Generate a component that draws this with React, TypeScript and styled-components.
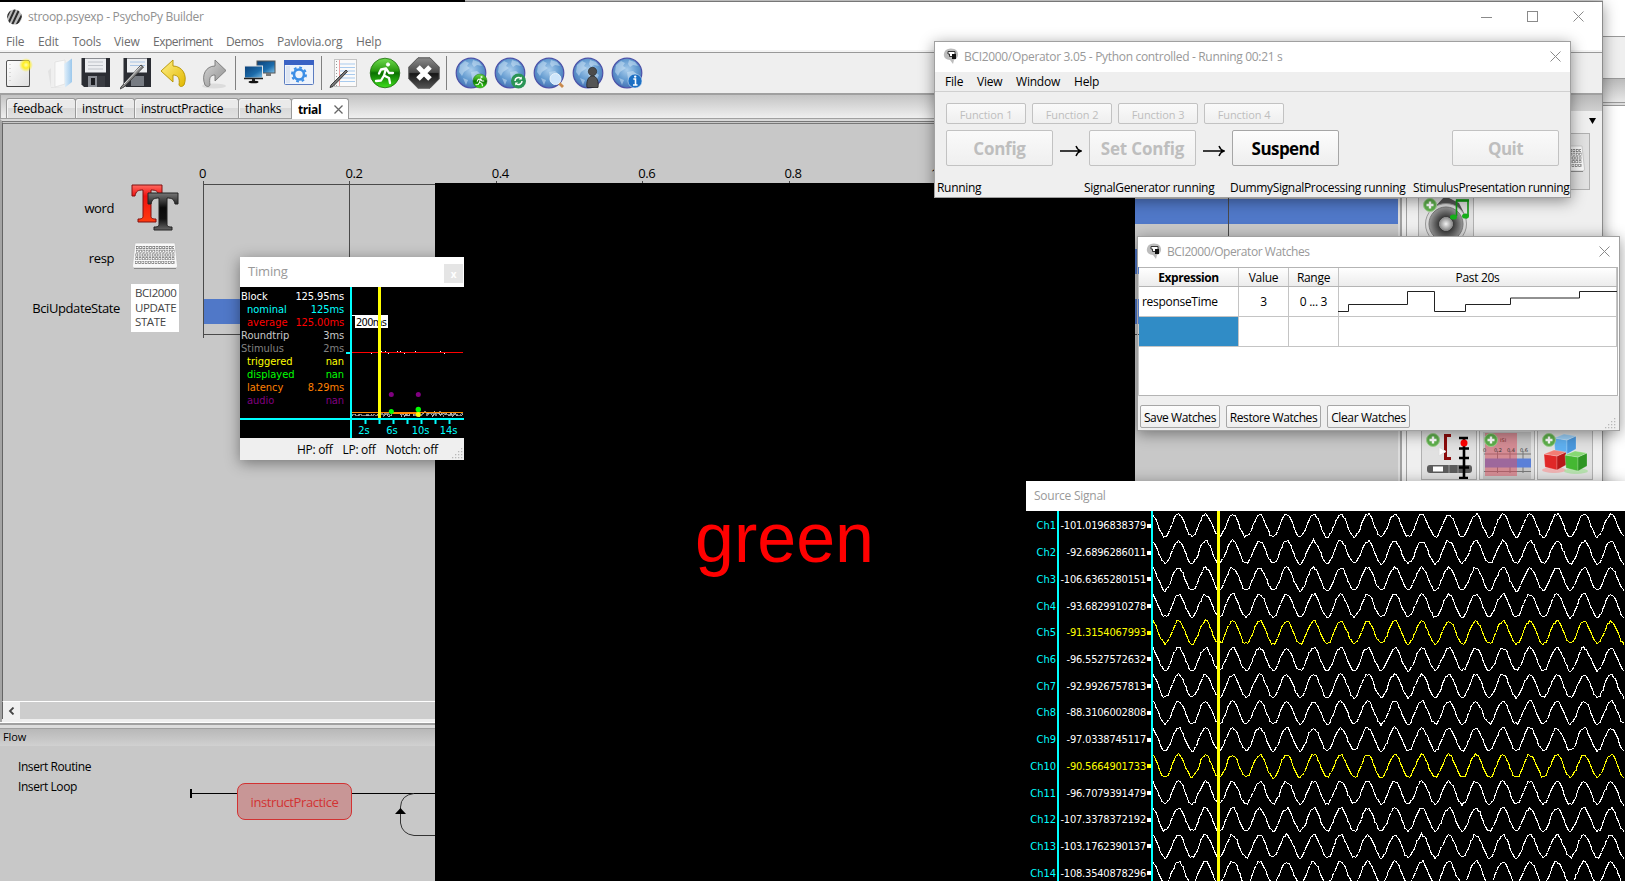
import React from "react";
import styled, { createGlobalStyle, css } from "styled-components";

const Global = createGlobalStyle`
  html, body { margin: 0; padding: 0; background: #fff; overflow: hidden; }
  * { box-sizing: border-box; }
  svg { display: block; flex: none; }
`;

const ui = `"Open Sans", "Noto Sans", sans-serif`;
const mono = `"DejaVu Sans Condensed", "DejaVu Sans", sans-serif`;

const Txt = styled.span<{ $s?: number; $ls?: number; $c?: string; $b?: boolean; $f?: string }>`
  font-family: ${(p) => p.$f ?? ui};
  font-size: ${(p) => p.$s ?? 12}px;
  letter-spacing: ${(p) => p.$ls ?? -0.3}px;
  color: ${(p) => p.$c ?? "#000"};
  font-weight: ${(p) => (p.$b ? 700 : 400)};
  white-space: nowrap;
`;

/* ---------- desktop ---------- */
const Desktop = styled.div`
  position: relative;
  width: 1625px;
  height: 881px;
  overflow: hidden;
  background: #fff;
`;

const Win = styled.section<{ $x: number; $y: number; $w: number; $h: number; $border?: string; $shadow?: boolean }>`
  position: absolute;
  left: ${(p) => p.$x}px;
  top: ${(p) => p.$y}px;
  width: ${(p) => p.$w}px;
  height: ${(p) => p.$h}px;
  display: flex;
  flex-direction: column;
  ${(p) => p.$border && css`border: 1px solid ${p.$border};`}
  ${(p) => p.$shadow && css`box-shadow: 0 3px 14px rgba(0, 0, 0, 0.42);`}
`;

const TopStrip = styled.div`
  height: 2px;
  display: flex;
  background: #d4d4d4;
  border-bottom: 1px solid #8a8a8a;
  &::before { content: ""; width: 465px; height: 2px; background: #000; flex: none; }
`;

const BackWindow = styled(Win)`
  background: #fff;
`;
const BackBand = styled.div<{ $h: number; $bg: string; $line?: string }>`
  height: ${(p) => p.$h}px;
  flex: none;
  background: ${(p) => p.$bg};
  border-top: 1px solid ${(p) => p.$line ?? "transparent"};
`;

/* ---------- PsychoPy builder ---------- */
const Builder = styled(Win)`
  background: #efefef;
  border-right: 1px solid #8c8c8c;
`;
const BuilderTitle = styled.header`
  height: 29px;
  background: #fff;
  display: flex;
  align-items: center;
  padding-left: 7px;
  gap: 6px;
  flex: none;
`;
const Controls = styled.div`
  margin-left: auto;
  display: flex;
  align-items: center;
  gap: 35px;
  padding-right: 18px;
`;
const BuilderMenu = styled.nav`
  height: 21px;
  flex: none;
  background: #fff;
  display: flex;
  align-items: center;
  padding-left: 6px;
`;
const MenuItem = styled.div<{ $w: number }>`
  width: ${(p) => p.$w}px;
  display: flex;
`;
const Toolbar = styled.div`
  height: 43px;
  flex: none;
  background: #efefef;
  border-top: 1px solid #999;
  border-bottom: 2px solid #a0a0a0;
  box-shadow: 0 -2px 0 #f4f4f4;
  display: flex;
  align-items: center;
  padding-left: 4px;
`;
const Tool = styled.div<{ $w: number }>`
  width: ${(p) => p.$w}px;
  flex: none;
  display: flex;
  align-items: center;
`;
const Sep = styled.div<{ $r: number }>`
  width: 1px;
  height: 34px;
  background: #808080;
  margin-right: ${(p) => p.$r}px;
  flex: none;
`;
const Body = styled.div`
  flex: 1;
  display: flex;
  min-height: 0;
`;
const LeftCol = styled.div`
  width: 1402px;
  flex: none;
  display: flex;
  flex-direction: column;
`;
const Tabs = styled.div`
  height: 24px;
  flex: none;
  display: flex;
  align-items: flex-end;
  padding-left: 5px;
  background: linear-gradient(#c4c4c4, #efefef);
  border-bottom: 1px solid #a0a0a0;
  border-left: 1px solid #a0a0a0;
`;
const Tab = styled.div<{ $w: number; $on?: boolean }>`
  width: ${(p) => p.$w}px;
  height: ${(p) => (p.$on ? 21 : 20)}px;
  margin-bottom: ${(p) => (p.$on ? -1 : 0)}px;
  flex: none;
  display: flex;
  align-items: center;
  justify-content: space-between;
  padding: 0 5px 0 6px;
  border: 1px solid #999;
  border-bottom: 0;
  margin-right: -1px;
  border-radius: 3px 3px 0 0;
  background: ${(p) => (p.$on ? "#fff" : "linear-gradient(#eaeaea 0 45%, #dadada 50%, #e2e2e2)")};
  box-shadow: ${(p) => (p.$on ? "none" : "inset 1px 1px 0 #f6f6f6")};
`;
const CanvasFrame = styled.div`
  flex: none;
  height: 603px;
  border-top: 2px solid #d9d9d9;
  border-left: 2px solid #a4a4a4;
  border-right: 2px solid #a0a0a0;
  display: flex;
  flex-direction: column;
`;
const RoutineCanvas = styled.div`
  height: 580px;
  flex: none;
  background: #c8c8c8;
  border-top: 3px double #777;
  border-left: 1px solid #646464;
  border-right: 2px solid #dcdcdc;
  display: flex;
  overflow: hidden;
`;
const Components = styled.div`
  width: 200px;
  flex: none;
  padding-top: 59px;
  display: flex;
  flex-direction: column;
`;
const ComponentRow = styled.div<{ $g: number }>`
  height: 50px;
  display: flex;
  align-items: center;
  justify-content: flex-end;
  gap: ${(p) => p.$g}px;
  padding-right: 24px;
`;
const Raised = styled.div`
  padding-bottom: 5px;
`;
const BciIcon = styled.div`
  width: 48px;
  height: 48px;
  background: #fff;
  display: flex;
  flex-direction: column;
  justify-content: center;
  padding-left: 4px;
  & > span { line-height: 14.4px; }
`;
const ScrollRow = styled.div`
  height: 18px;
  flex: none;
  display: flex;
  background: #cdcdcd;
  border-top: 1px solid #fff;
  border-left: 1px solid #646464;
`;
const ScrollButton = styled.div`
  width: 17px;
  background: #f0f0f0;
  display: flex;
  align-items: center;
  justify-content: center;
`;
const FlowHead = styled.div`
  height: 24px;
  flex: none;
  border-top: 1px solid #fff;
  display: flex;
  flex-direction: column;
`;
const Sash = styled.div`
  height: 6px;
  flex: none;
  background: #dcdcdc;
  border-top: 2px solid #a0a0a0;
  border-bottom: 1px solid #a0a0a0;
`;
const FlowTitle = styled.div`
  flex: 1;
  background: linear-gradient(#b8b8b8, #d2d2d2);
  display: flex;
  align-items: center;
  padding: 0 0 3px 3px;
`;
const FlowBody = styled.div`
  flex: 1;
  background: #c8c8c8;
  display: flex;
`;
const FlowActions = styled.div`
  width: 180px;
  padding: 11px 0 0 18px;
  display: flex;
  flex-direction: column;
  & > span { line-height: 20px; }
`;
const FlowLine = styled.div`
  display: flex;
  align-items: flex-start;
  padding-top: 37px;
`;
const Routine = styled.div`
  width: 115px;
  height: 37px;
  flex: none;
  border: 1px solid #d23232;
  border-radius: 8px;
  background: #c89696;
  display: flex;
  align-items: center;
  justify-content: center;
`;
const Side = styled.aside`
  flex: 1;
  border-left: 1px solid #a0a0a0;
  margin-left: 4px;
  background: #efefef;
  display: flex;
  flex-direction: column;
`;
const SideHead = styled.div`
  height: 16px;
  flex: none;
  background: linear-gradient(#b8b8b8, #d0d0d0);
`;
const SideDrop = styled.div`
  height: 20px;
  flex: none;
  display: flex;
  justify-content: flex-end;
  align-items: center;
  padding-right: 6px;
`;
const TileRow = styled.div<{ $mt: number; $l: number }>`
  margin-top: ${(p) => p.$mt}px;
  padding-left: ${(p) => p.$l}px;
  display: flex;
  gap: 2px;
`;
const Tile = styled.div<{ $ghost?: boolean }>`
  width: 56px;
  height: 57px;
  flex: none;
  border: 1px solid #b0b0b0;
  background: #e1e1e1;
  display: flex;
  align-items: center;
  justify-content: center;
  visibility: ${(p) => (p.$ghost ? "hidden" : "visible")};
`;

const StimWindow = styled(Win)`
  background: #000;
  align-items: center;
`;
const Stim = styled.div`
  margin-top: 315px;
  margin-right: 1px;
  font: 70px/80px "Liberation Sans", Arial, sans-serif;
  color: #f00;
`;

/* ---------- shared window pieces ---------- */
const TitleBar = styled.header<{ $pl: number; $pr?: number }>`
  height: 30px;
  flex: none;
  background: #fff;
  display: flex;
  align-items: center;
  gap: 5px;
  padding-bottom: 2px;
  padding-left: ${(p) => p.$pl}px;
  padding-right: ${(p) => p.$pr ?? 0}px;
  & > :last-child:not(:first-child) { margin-left: auto; }
`;
const QtButton = styled.div<{ $w: number; $h: number; $dim?: boolean }>`
  width: ${(p) => p.$w}px;
  height: ${(p) => p.$h}px;
  flex: none;
  border: 1px solid ${(p) => (p.$dim ? "#c2c2c2" : "#a6a6a6")};
  border-radius: 2px;
  background: ${(p) => (p.$dim ? "linear-gradient(#fafafa, #efefef)" : "linear-gradient(#fdfdfd, #eeeeee)")};
  display: flex;
  align-items: center;
  justify-content: center;
  padding-top: 1px;
`;

/* ---------- operator ---------- */
const OpMenu = styled.nav`
  height: 20px;
  flex: none;
  background: #efefef;
  border-bottom: 1px solid #d0d0d0;
  display: flex;
  align-items: center;
  padding-left: 10px;
`;
const OpBody = styled.div`
  flex: 1;
  background: #efefef;
  padding: 11px 11px 0 11px;
`;
const OpFns = styled.div`
  display: flex;
  gap: 6px;
`;
const OpMain = styled.div`
  display: flex;
  margin-top: 6px;
  align-items: center;
`;
const Arrow = styled.div`
  width: 36px;
  display: flex;
  justify-content: center;
  padding-top: 5px;
`;
const Push = styled.div`margin-left: auto;`;
const OpStatus = styled.div`
  height: 19px;
  flex: none;
  background: #efefef;
  display: grid;
  grid-template-columns: 147px 146px 183px 1fr;
  padding-left: 2px;
  align-items: center;
`;

/* ---------- watches ---------- */
const Table = styled.div`
  height: 129px;
  flex: none;
  margin: 0 1px;
  background: #fff;
  border: 1px solid #b4b4b4;
  border-left: 0;
`;
const cols = css`
  display: grid;
  grid-template-columns: 100px 50px 50px 1fr;
`;
const HeadRow = styled.div`
  ${cols}
  height: 19px;
  background: linear-gradient(#fff, #ececec);
  border-bottom: 1px solid #b4b4b4;
`;
const Row = styled.div`
  ${cols}
  height: 30px;
  border-bottom: 1px solid #c4c4c4;
`;
const Cell = styled.div<{ $left?: boolean; $sel?: boolean }>`
  display: flex;
  align-items: center;
  justify-content: ${(p) => (p.$left ? "flex-start" : "center")};
  padding-left: ${(p) => (p.$left ? 3 : 0)}px;
  border-right: 1px solid #c4c4c4;
  background: ${(p) => (p.$sel ? "#308cc6" : "transparent")};
  min-width: 0;
`;
const WatchFoot = styled.div`
  flex: 1;
  background: #efefef;
  display: flex;
  gap: 6px;
  padding: 9px 2px 0 2px;
`;
const Grip = styled.div`
  margin-left: auto;
  align-self: flex-end;
`;

/* ---------- timing ---------- */
const CloseBox = styled.div`
  width: 19px;
  height: 19px;
  margin-top: 5px;
  background: #e5e5e5;
  display: flex;
  align-items: center;
  justify-content: center;
`;
const TimingBody = styled.div`
  height: 151px;
  flex: none;
  background: #000;
  display: flex;
  & > svg { overflow: visible; }
`;
const Stats = styled.div`
  width: 104px;
  flex: none;
  padding: 3px 0 0 1px;
`;
const Stat = styled.div<{ $in?: boolean }>`
  height: 13px;
  display: flex;
  justify-content: space-between;
  align-items: center;
  padding-left: ${(p) => (p.$in ? 6 : 0)}px;
`;
const TimingFoot = styled.div`
  flex: 1;
  background: #efefef;
  display: flex;
  align-items: center;
  gap: 10px;
  padding-left: 57px;
`;

/* ---------- source signal ---------- */
const SigBody = styled.div`
  flex: 1;
  background: #000;
  display: flex;
  overflow: hidden;
`;
const SigNames = styled.div<{ $w: number }>`
  width: ${(p) => p.$w}px;
  flex: none;
  padding-top: 1.5px;
  border-right: 2px solid #00ffff;
`;
const SigCell = styled.div<{ $y: boolean; $v?: boolean }>`
  height: 26.73px;
  display: flex;
  align-items: center;
  justify-content: flex-end;
  gap: 1px;
  padding-right: ${(p) => (p.$v ? 0 : 1)}px;
  &::after {
    content: "";
    display: ${(p) => (p.$v ? "block" : "none")};
    width: 4px;
    height: 4px;
    background: ${(p) => (p.$y ? "#ff0" : "#fff")};
  }
`;

/* ---------- icons ---------- */
const Defs = () => (
  <svg width="0" height="0" style={{ position: "absolute" }}>
    <defs>
      <radialGradient id="globe" cx="50%" cy="40%" r="60%">
        <stop offset="0" stopColor="#a9cdec" /><stop offset=".6" stopColor="#6199cf" /><stop offset="1" stopColor="#4672b4" />
      </radialGradient>
      <linearGradient id="run" x1="0" y1="0" x2="0" y2="1">
        <stop offset="0" stopColor="#6fdc4e" /><stop offset=".42" stopColor="#2a9a10" /><stop offset=".5" stopColor="#0a7000" /><stop offset="1" stopColor="#3fe01c" />
      </linearGradient>
      <linearGradient id="stop" x1="0" y1="0" x2="0" y2="1">
        <stop offset="0" stopColor="#8a8a8a" /><stop offset=".48" stopColor="#4a4a4a" /><stop offset=".52" stopColor="#161616" /><stop offset="1" stopColor="#555" />
      </linearGradient>
      <linearGradient id="yel" x1="0" y1="0" x2="1" y2="1">
        <stop offset="0" stopColor="#fff08a" /><stop offset="1" stopColor="#e2b800" />
      </linearGradient>
      <linearGradient id="gry" x1="0" y1="0" x2="1" y2="1">
        <stop offset="0" stopColor="#d8d8d8" /><stop offset="1" stopColor="#8c8c8c" />
      </linearGradient>
      <linearGradient id="scr" x1="0" y1="0" x2="1" y2="1">
        <stop offset="0" stopColor="#0b3f77" /><stop offset=".6" stopColor="#1c6cab" /><stop offset="1" stopColor="#7fc0e8" />
      </linearGradient>
      <linearGradient id="redT" x1="0" y1="0" x2="0" y2="1">
        <stop offset="0" stopColor="#ff6a60" /><stop offset=".3" stopColor="#f01010" /><stop offset="1" stopColor="#ff3c10" />
      </linearGradient>
      <linearGradient id="blkT" x1="0" y1="0" x2="0" y2="1">
        <stop offset="0" stopColor="#777" /><stop offset=".4" stopColor="#0a0a0a" /><stop offset=".7" stopColor="#111" /><stop offset="1" stopColor="#666" />
      </linearGradient>
      <radialGradient id="cone"><stop offset="0" stopColor="#f4f4f4" /><stop offset=".4" stopColor="#888" /><stop offset=".42" stopColor="#3a3a3a" /><stop offset="1" stopColor="#9a9a9a" /></radialGradient>
      <radialGradient id="sun"><stop offset="0" stopColor="#ffffb0" /><stop offset=".45" stopColor="#ffee20" /><stop offset="1" stopColor="#ffee20" stopOpacity="0" /></radialGradient>
      <linearGradient id="page" x1="0" y1="0" x2="1" y2="1"><stop offset="0" stopColor="#fff" /><stop offset="1" stopColor="#dedede" /></linearGradient>
      <linearGradient id="fold" x1="0" y1="0" x2="1" y2="0"><stop offset="0" stopColor="#e4f1fb" /><stop offset="1" stopColor="#9cc8ec" /></linearGradient>
    </defs>
  </svg>
);

const AppLogo = () => (
  <svg width="15" height="16" viewBox="0 0 15 16">
    <circle cx="7.5" cy="8" r="7.4" fill="#bdbdbd" />
    <clipPath id="lc"><circle cx="7.5" cy="8" r="7.4" /></clipPath>
    <g clipPath="url(#lc)" stroke="#2e2e2e" strokeWidth="2">
      <path d="M-3 14 4 -1M1 15 8 0M5 16 12 1M9 17 17 2" />
    </g>
  </svg>
);
const X = ({ s = 10, c = "#8a8a8a", w = 1 }: { s?: number; c?: string; w?: number }) => (
  <svg width={s} height={s} viewBox={`0 0 ${s} ${s}`}><path d={`M.5 .5 ${s - 0.5} ${s - 0.5}M${s - 0.5} .5 .5 ${s - 0.5}`} stroke={c} strokeWidth={w} /></svg>
);
const HeadIcon = () => (
  <svg width="16" height="16" viewBox="0 0 16 16">
    <path d="M2 3C4 0 11-.5 14 3c2 3 1 6-1 8l-2 1-1 4-3-4C2 12-1 8 2 3Z" fill="#bcbcbc" />
    <path d="M5 3.500h7v5H6.500V6H5Z" fill="#fff" stroke="#333" />
    <rect x="9" y="6" width="4" height="5" fill="#111" />
  </svg>
);
const NewIcon = () => (
  <svg width="32" height="34" viewBox="0 0 32 34">
    <rect x="2.500" y="4.500" width="23" height="26" rx="1.500" fill="url(#page)" stroke="#555" />
    <path d="M2.500 30.500H25.500" stroke="#444" /><path d="M6 8v20" stroke="#bbb" strokeDasharray="1 3" />
    <circle cx="22" cy="9" r="7" fill="url(#sun)" />
  </svg>
);
const OpenIcon = () => (
  <svg width="32" height="34" viewBox="0 0 32 34">
    <path d="M8 5 14 3 26 3V27L20 31H8Z" fill="#f0f0f0" />
    <path d="M10 6 20 4V28L10 31Z" fill="#fafafa" stroke="#d8d8d8" strokeWidth=".6" />
    <path d="M19 8 27 2.500V26L20 31.500Z" fill="url(#fold)" />
    <path d="M3 15 6 12V31H18L6 32Z" fill="#e2e2e2" />
  </svg>
);
const SaveIcon = () => (
  <svg width="32" height="34" viewBox="0 0 32 34">
    <path d="M1.500 2H30V31H4L1.500 28.500Z" fill="#2b2d33" />
    <rect x="5" y="2.500" width="21" height="14" fill="#eceef1" />
    <path d="M8 6H23M8 9.500H23M8 13H23" stroke="#c0c4ca" />
    <rect x="8" y="20" width="16" height="11" fill="#8b8e95" /><rect x="11" y="22" width="4" height="7" fill="#1c1d21" />
    <rect x="17" y="20" width="8" height="11" fill="#3a3c42" />
  </svg>
);
const Pen = () => <g><path d="M1 31 21 9 23.500 11 4 31 0 33Z" fill="#8b8b8b" stroke="#3c3c3c" strokeWidth=".9" /><path d="M4 28 21 10" stroke="#e6e6e6" /></g>;
const SaveAsIcon = () => (
  <svg width="34" height="34" viewBox="0 0 34 34">
    <g transform="translate(2)"><path d="M1.500 2H29V31H4L1.500 28.500Z" fill="#2b2d33" />
      <rect x="5" y="2.500" width="20" height="14" fill="#eceef1" /><path d="M8 6H23M8 9.500H23" stroke="#a9c4e4" />
      <rect x="9" y="20" width="13" height="10" fill="#777b82" /></g>
    <Pen />
  </svg>
);
const UndoIcon = () => (
  <svg width="28" height="34" viewBox="0 0 28 34">
    <path d="M13 4V10C22 10 28 19 24 29C22 31 20 31 19 29C20 22 18 19 13 19V26L1 15Z" fill="url(#yel)" stroke="#b39200" strokeWidth=".9" />
  </svg>
);
const RedoIcon = () => (
  <svg width="28" height="34" viewBox="0 0 28 34">
    <ellipse cx="13" cy="30" rx="12" ry="2.500" fill="#dcdcdc" />
    <path d="M14 4V10C5 10 0 19 4 29C6 31 8 31 9 29C8 22 9 19 14 19V25L25 14.500Z" fill="url(#gry)" stroke="#777" strokeWidth=".9" />
  </svg>
);
const MonitorsIcon = () => (
  <svg width="32" height="34" viewBox="0 0 32 34">
    <rect x="13" y="5" width="18" height="12" fill="url(#scr)" stroke="#555" /><rect x="22" y="17" width="5" height="3" fill="#777" />
    <rect x=".5" y="10" width="18" height="12" fill="url(#scr)" stroke="#e6e6e6" /><path d="M0 22.500H19" stroke="#222" strokeWidth="1.500" />
    <rect x="8" y="23" width="3" height="3" fill="#222" /><ellipse cx="9.500" cy="26" rx="5" ry="1.300" fill="#111" />
  </svg>
);
const PrefsIcon = () => (
  <svg width="30" height="34" viewBox="0 0 30 34">
    <rect x=".5" y="4.500" width="29" height="24" rx="1" fill="#eef3fb" stroke="#5b7cc0" /><rect x="0" y="4" width="30" height="5" fill="#3a62c4" />
    <rect x="2" y="10" width="4" height="17" fill="#dde5f2" />
    <circle cx="15" cy="18.500" r="5" fill="none" stroke="#3c8ee6" strokeWidth="2.600" />
    <circle cx="15" cy="18.500" r="7" fill="none" stroke="#3c8ee6" strokeWidth="2" strokeDasharray="2.700 2.800" />
  </svg>
);
const ScriptIcon = () => (
  <svg width="30" height="34" viewBox="0 0 30 34">
    <rect x="5.500" y="3.500" width="22" height="27" fill="#fafafa" stroke="#c4c4c4" />
    <path d="M10 8H26M10 11.500H26M10 15H26M10 18.500H26M10 22H26M10 25.500H26" stroke="#a9cbee" /><path d="M10.500 4V30" stroke="#f2a0a0" /><path d="M7.500 5V30" stroke="#999" strokeDasharray="1 2" />
    <path d="M2 29 17 14 18.500 15.500 4 30.500 1 31.500Z" fill="#777" stroke="#222" strokeWidth=".8" />
  </svg>
);
const Runner = () => (
  <g fill="none" stroke="#fff" strokeWidth="2.300" strokeLinecap="round" strokeLinejoin="round">
    <circle cx="19" cy="7.500" r="1.600" fill="#fff" stroke="#fff" strokeWidth="1" />
    <path d="M17 11.500 15 18.500 20 21 21 26M15 18.500 12 23.500 7 24M17 11.500 12 12.500 10 16.500M17.500 12 20 16 24 16" />
  </g>
);
const RunIcon = () => (
  <svg width="32" height="32" viewBox="0 0 32 32"><circle cx="16" cy="16" r="14.800" fill="url(#run)" stroke="#1e6a10" strokeWidth=".8" /><Runner /></svg>
);
const StopIcon = () => (
  <svg width="32" height="32" viewBox="0 0 32 32">
    <path d="M10 .8H22L31.200 10V22L22 31.200H10L.8 22V10Z" fill="url(#stop)" stroke="#555" />
    <path d="M10 10 22 22M22 10 10 22" stroke="#fff" strokeWidth="5" />
  </svg>
);
const Globe = ({ children }: { children: React.ReactNode }) => (
  <svg width="33" height="32" viewBox="0 0 33 32">
    <circle cx="16" cy="16" r="14.800" fill="url(#globe)" stroke="#4c51a8" strokeWidth="1.200" />
    <path d="M5 8 10 4 14 6 12 9 15 11 9 15 7 19 4 15Z M18 3 24 5 27 9 22 8 19 10 17 7Z M16 15 22 14 27 18 24 24 20 27 17 22Z M8 21 13 23 11 28Z" fill="#d3e8f8" opacity=".5" />
    {children}
  </svg>
);
const globes = [
  <><circle cx="25" cy="24" r="7" fill="url(#run)" stroke="#1e6a10" strokeWidth=".5" /><g transform="translate(17.500 16.500) scale(.47)"><Runner /></g></>,
  <><circle cx="24.500" cy="24" r="7.500" fill="#2b9556" /><path d="M21 24a3.500 3.500 0 0 1 6-2.500M28 24a3.500 3.500 0 0 1-6 2.500" fill="none" stroke="#fff" strokeWidth="1.500" /><path d="M27.800 19.500v3h-3ZM21.200 28.500v-3h3Z" fill="#fff" /></>,
  <><path d="M25 25 30 30" stroke="#c98a4c" strokeWidth="2.800" /><circle cx="22.500" cy="22" r="5.500" fill="#cfe6fb" stroke="#e9f3fc" /></>,
  <><circle cx="20.500" cy="14.500" r="4.200" fill="#4c4c4c" stroke="#222" strokeWidth=".6" /><path d="M20.500 19C25 19 27 25 26 30.500H15C14 25 16 19 20.500 19Z" fill="#555" stroke="#222" strokeWidth=".8" /></>,
  <><circle cx="24" cy="24" r="7" fill="#1d70c4" stroke="#e2edf8" strokeWidth=".5" /><path d="M22.300 22H24.500V28M22 28H26.500" stroke="#fff" strokeWidth="1.600" fill="none" /><circle cx="24.200" cy="19.600" r="1.200" fill="#fff" /></>,
];
const tPath = "M0 0H30V11H27C26 6 24 5 19 5V31C19 33 20 34 24 34V37H6V34C10 34 11 33 11 31V5C6 5 4 6 3 11H0Z";
const TextIcon = () => (
  <svg width="48" height="48" viewBox="0 0 48 48">
    <path d={tPath} transform="translate(1 1)" fill="url(#redT)" stroke="#801010" />
    <path d={tPath} transform="translate(17 9)" fill="url(#blkT)" stroke="#222" />
  </svg>
);
const KeyboardIcon = () => (
  <svg width="48" height="28" viewBox="0 0 48 28">
    <path d="M4 1H44L46.500 24Q46.500 26 45 26H3Q1.500 26 1.500 24Z" fill="#f8f8f8" stroke="#c0c0c0" strokeWidth=".8" />
    <path d="M3 26.500H45" stroke="#8a8a8a" />
    <g stroke="#6a6a6a" strokeWidth="2.800" strokeDasharray="2.500 .8"><path d="M5 5.500H43M5 9.200H43.500M4.500 13H44M4.500 16.700H44M4 20.300H44" /></g>
    <g stroke="#fff" strokeWidth="1.500" strokeDasharray="1.500 1.800" strokeDashoffset="-.5"><path d="M5 5.500H43M5 9.200H43.500M4.500 13H44M4.500 16.700H44M4 20.300H44" /></g>
  </svg>
);
const Plus = ({ x, y }: { x: number; y: number }) => (
  <g transform={`translate(${x} ${y})`}>
    <circle r="6.500" fill="#5eb04c" stroke="#9fd08f" /><path d="M-3.500 0H3.500M0 -3.500V3.500" stroke="#fff" strokeWidth="2.400" />
  </g>
);
const SpeakerIcon = () => (
  <svg width="54" height="55" viewBox="0 0 54 55">
    <path d="M14 18 26 5 40 12 48 28Z" fill="#555" />
    <circle cx="27" cy="33" r="20.500" fill="#d9d9d9" stroke="#999" /><circle cx="27" cy="33" r="17" fill="url(#cone)" stroke="#777" />
    <path d="M37.500 25V9.500H49V25" fill="none" stroke="#0f9a12" strokeWidth="1.600" /><path d="M37 9.500H50" stroke="#0f9a12" strokeWidth="2.500" />
    <ellipse cx="34.500" cy="26" rx="3.500" ry="2.600" fill="#16b01a" /><ellipse cx="46.500" cy="25" rx="3.500" ry="2.600" fill="#16b01a" />
    <Plus x={11} y={14} />
  </svg>
);
const SliderIcon = () => (
  <svg width="54" height="55" viewBox="0 0 54 55">
    <path d="M29 11.500H23.500V34.500H29" fill="none" stroke="#8c0c0c" strokeWidth="3" /><path d="M17 23 24 27.500 17 32Z" fill="#fff" stroke="#ddd" />
    <rect x="5" y="41" width="45" height="8" rx="3" fill="#5c5c5c" /><rect x="11" y="42.500" width="10" height="5" fill="#fff" /><path d="M27 41V49M36 41V49" stroke="#999" />
    <path d="M42 14V54M37 14H46M37 24.500H47M37 34H47M37 43.500H47M37 54H46" stroke="#000" strokeWidth="2.600" />
    <circle cx="42" cy="19" r="3.500" fill="#f00" /><Plus x={11} y={16} />
  </svg>
);
const StaticIcon = () => (
  <svg width="54" height="55" viewBox="0 0 54 55">
    <rect x="3" y="8" width="48" height="47" fill="#c8c8c8" />
    <path d="M4 30H51M4 47.500H51M17.500 27V49M30 27V49M43 27V49" stroke="#777" fill="none" />
    <rect x="5" y="34.500" width="46" height="9" fill="#5a80d8" /><rect x="5" y="9" width="32" height="43" fill="#e05060" opacity=".5" />
    <g fontFamily="DejaVu Sans" fontSize="5" fill="#333"><text x="3" y="27.500">0</text><text x="14" y="27.500">0.2</text><text x="27" y="27.500">0.4</text><text x="40" y="27.500">0.6</text><text x="20" y="18" fill="#803030">ISI</text></g>
    <Plus x={11} y={16} />
  </svg>
);
const Cube = ({ x, y, c, t, s }: { x: number; y: number; c: string; t: string; s: string }) => (
  <g transform={`translate(${x} ${y})`} stroke="#fff" strokeOpacity=".35" strokeWidth=".6"><path d="M0 4 13 6V20L1 17Z" fill={c} /><path d="M13 6 22 2V15L13 20Z" fill={s} /><path d="M0 4 10 0 22 2 13 6Z" fill={t} /></g>
);
const CubesIcon = () => (
  <svg width="54" height="55" viewBox="0 0 54 55">
    <ellipse cx="16" cy="46" rx="12" ry="3" fill="#f7a0a0" opacity=".7" /><ellipse cx="38" cy="47" rx="12" ry="3" fill="#a5e29a" opacity=".7" />
    <Cube x={16} y={10} c="#5fb0f0" t="#9bd0f8" s="#4a98dd" />
    <Cube x={6} y={26} c="#e02828" t="#f27c74" s="#b81818" />
    <Cube x={27} y={27} c="#45b832" t="#86d873" s="#2f9624" />
    <Plus x={11} y={16} />
  </svg>
);
const GripDots = () => (
  <svg width="12" height="12" viewBox="0 0 12 12" fill="#b8b8b8">
    {[[9, 0], [6, 3], [9, 3], [3, 6], [6, 6], [9, 6], [0, 9], [3, 9], [6, 9], [9, 9]].map(([x, y]) => <rect key={`${x}-${y}`} x={x} y={y} width="1.300" height="1.300" />)}
  </svg>
);
const ArrowRight = () => (
  <svg width="22" height="12" viewBox="0 0 22 12"><path d="M0 6H20.500M16 1Q17.500 5 21 6Q17.500 7 16 11" fill="none" stroke="#000" strokeWidth="1.400" /></svg>
);

/* ---------- data & charts ---------- */
function rng(seed: number) {
  let s = seed;
  return () => {
    s = (s * 1103515245 + 12345) & 0x7fffffff;
    return s / 0x7fffffff;
  };
}
const values = ["-101.0196838379", "-92.6896286011", "-106.6365280151", "-93.6829910278", "-91.3154067993", "-96.5527572632", "-92.9926757813", "-88.3106002808", "-97.0338745117", "-90.5664901733", "-96.7079391479", "-107.3378372192", "-103.1762390137", "-108.3540878296"];
const hot = (i: number) => i === 4 || i === 9;

const wave = (i: number) => {
  const r = rng(i * 977 + 31);
  const c = 14 + i * 26.73;
  const pts: string[] = [];
  for (let x = 0; x <= 472; x += 1.5) {
    const y = c - 11.3 * Math.cos(((x + 1.5) / 27.03) * Math.PI * 2) + (r() - 0.5) * 2.4;
    pts.push(`${x.toFixed(1)} ${(Math.round(y) + 0.5).toFixed(1)}`);
  }
  return "M" + pts.join("L");
};

const SignalPlot = () => (
  <svg width="472" height="370" viewBox="0 0 472 370" shapeRendering="crispEdges">
    {Array.from({ length: 15 }, (_, i) => <path key={i} d={wave(i)} fill="none" stroke={hot(i) ? "#ff0" : "#fff"} />)}
    <rect x="64" y="0" width="3" height="370" fill="#ff0" />
  </svg>
);

const noise = (() => {
  const r = rng(77);
  let a = "M112 128";
  let b = "M112 127";
  for (let x = 112; x <= 223; x += 1.5) {
    const k = x > 141 ? 4.5 : 2;
    a += `L${x} ${(129.5 - r() * k).toFixed(1)}`;
    b += `L${x} ${(129 - r() * k).toFixed(1)}`;
  }
  return [a, b];
})();

const TimingPlot = () => (
  <svg width="120" height="151" viewBox="104 0 120 151">
    <g shapeRendering="crispEdges">
      <path d="M112 65.500H223" stroke="#f00" />
      <path d={noise[0]} fill="none" stroke="#b0b0b0" /><path d={noise[1]} fill="none" stroke="#808080" />
      {[131, 141, 145, 148, 157, 160, 164, 175, 200, 204].map((x, i) => <rect key={x} x={x} y={i % 3 ? 64 : 66} width="1" height="1" fill="#fff" />)}
      <path d="M112 125.500H223M151 126.500H176" stroke="#f80" />
      <rect x="112" y="28" width="4" height="1" fill="#fff" />
      <rect x="115" y="28" width="33" height="13" fill="#fff" />
    </g>
    <g fill="#800080"><circle cx="151.300" cy="107.500" r="2.500" /><circle cx="178.300" cy="107.500" r="2.500" /></g>
    <g fill="#0f0"><circle cx="151.300" cy="124.500" r="2.500" /><circle cx="178.300" cy="122.500" r="2.700" /></g>
    <circle cx="178.300" cy="127.500" r="2.500" fill="#ff0" />
    <text x="116" y="39" fontFamily="DejaVu Sans Condensed" fontSize="11" textLength="31">200ms</text>
    <rect x="138" y="0" width="3" height="131" fill="#ff0" />
    <g fill="#0ff">
      <rect x="110" y="0" width="2" height="151" /><rect x="106" y="65" width="4" height="2" /><rect x="0" y="131" width="224" height="2" />
      {[125, 139, 153, 167, 181, 195, 209].map((x) => <rect key={x} x={x - 0.5} y="133" width="2" height="4" />)}
    </g>
    <g fill="#0ff" fontFamily="DejaVu Sans Condensed" fontSize="11" textAnchor="middle">
      <text x="124" y="147">2s</text><text x="152" y="147">6s</text><text x="180.500" y="147">10s</text><text x="208.500" y="147">14s</text>
    </g>
  </svg>
);

const Timeline = () => (
  <svg width="1196" height="240" viewBox="203 124 1196 240">
    <g fill="#5078c8"><rect x="203" y="199" width="1196" height="25" /><rect x="1100" y="249" width="120" height="25" /><rect x="203" y="299" width="1000" height="25" /></g>
    <rect x="203" y="190" width="900" height="50" fill="#c8c8c8" />
    <path d="M203.500 184.500H1399M203.500 334.500H1399" stroke="#4a4a4a" />
    {[0, 1, 2, 3, 4, 5, 6, 7].map((i) => <path key={i} d={`M${Math.round(203 + i * 146.4) + 0.5} 181V338`} stroke="#4a4a4a" />)}
  </svg>
);
const Chart = styled.div`
  flex: 1;
  min-width: 0;
  display: flex;
  flex-direction: column;
`;
const Scale = styled.div`
  height: 58px;
  flex: none;
  display: flex;
  align-items: flex-end;
  margin-left: -4px;
`;
const ScaleMark = styled.div`
  width: 146.4px;
  flex: none;
  display: flex;
`;
const Lift = styled.div`
  margin-top: -58px;
`;

const stats: [string, string, string, boolean][] = [
  ["Block", "125.95ms", "#fff", false], ["nominal", "125ms", "#0ff", true], ["average", "125.00ms", "#f00", true],
  ["Roundtrip", "3ms", "#c8c8c8", false], ["Stimulus", "2ms", "#808080", false], ["triggered", "nan", "#ff0", true],
  ["displayed", "nan", "#0f0", true], ["latency", "8.29ms", "#ff8000", true], ["audio", "nan", "#800080", true],
];

const menus: [string, number, number][] = [["File", 32, -0.15], ["Edit", 34.5, -0.15], ["Tools", 41.5, -0.3], ["View", 39, -0.15], ["Experiment", 73, -0.5], ["Demos", 51, -0.4], ["Pavlovia.org", 79, -0.2], ["Help", 40, -0.15]];
const tabs: [string, number, number][] = [["feedback", 70, -0.15], ["instruct", 60, -0.15], ["instructPractice", 105, -0.3], ["thanks", 54, -0.25]];

export default function App() {
  return (
    <Desktop>
      <Global />
      <Defs />
      <TopStrip />
      <BackWindow $x={1603} $y={0} $w={22} $h={881}>
        <BackBand $h={36} $bg="#fff" />
        <BackBand $h={42} $bg="#efefef" $line="#999" />
        <BackBand $h={24} $bg="linear-gradient(#bbb,#e8e8e8)" $line="#999" />
        <BackBand $h={3} $bg="#ddd" $line="#999" />
        <BackBand $h={4} $bg="#fff" $line="#999" />
      </BackWindow>

      <Builder $x={0} $y={2} $w={1603} $h={879} $shadow>
        <BuilderTitle>
          <AppLogo />
          <Txt $c="#909090" $ls={-0.3}>stroop.psyexp - PsychoPy Builder</Txt>
          <Controls>
            <svg width="11" height="11"><path d="M0 6.500H11" stroke="#8a8a8a" /></svg>
            <svg width="11" height="11"><rect x=".5" y=".5" width="10" height="10" fill="none" stroke="#8a8a8a" /></svg>
            <X s={11} />
          </Controls>
        </BuilderTitle>
        <BuilderMenu>
          {menus.map(([t, w, ls]) => <MenuItem key={t} $w={w}><Txt $c="#6d6d6d" $ls={ls}>{t}</Txt></MenuItem>)}
        </BuilderMenu>
        <Toolbar>
          <Tool $w={41}><NewIcon /></Tool>
          <Tool $w={35}><OpenIcon /></Tool>
          <Tool $w={40}><SaveIcon /></Tool>
          <Tool $w={40}><SaveAsIcon /></Tool>
          <Tool $w={41}><UndoIcon /></Tool>
          <Tool $w={34}><RedoIcon /></Tool>
          <Sep $r={8} />
          <Tool $w={40}><MonitorsIcon /></Tool>
          <Tool $w={37}><PrefsIcon /></Tool>
          <Sep $r={7} />
          <Tool $w={40}><ScriptIcon /></Tool>
          <Tool $w={39}><RunIcon /></Tool>
          <Tool $w={38}><StopIcon /></Tool>
          <Sep $r={8} />
          {globes.map((g, i) => <Tool key={i} $w={39}><Globe>{g}</Globe></Tool>)}
        </Toolbar>
        <Body>
          <LeftCol>
            <Tabs>
              {tabs.map(([t, w, ls]) => <Tab key={t} $w={w}><Txt $ls={ls}>{t}</Txt></Tab>)}
              <Tab $w={58} $on><Txt $b $ls={-0.4}>trial</Txt><X s={9} c="#666" w={1.3} /></Tab>
            </Tabs>
            <CanvasFrame>
              <RoutineCanvas>
                <Components>
                  <ComponentRow $g={17}><Txt $s={13} $ls={-0.4}>word</Txt><TextIcon /></ComponentRow>
                  <ComponentRow $g={17}><Txt $s={13} $ls={-0.4}>resp</Txt><Raised><KeyboardIcon /></Raised></ComponentRow>
                  <ComponentRow $g={11}>
                    <Txt $s={13} $ls={-0.4}>BciUpdateState</Txt>
                    <BciIcon>{["BCI2000", "UPDATE", "STATE"].map((t) => <Txt key={t} $s={11.5} $c="#444" $ls={-0.4}>{t}</Txt>)}</BciIcon>
                  </ComponentRow>
                </Components>
                <Chart>
                  <Scale>{["0", "0.2", "0.4", "0.6", "0.8", "1.0", "1.2", "1.4"].map((t) => <ScaleMark key={t}><Txt $s={13} $ls={-0.4}>{t}</Txt></ScaleMark>)}</Scale>
                  <Lift><Timeline /></Lift>
                </Chart>
              </RoutineCanvas>
              <ScrollRow><ScrollButton><svg width="7" height="8"><path d="M5.500 .5 2 4 5.500 7.500" fill="none" stroke="#444" strokeWidth="1.800" /></svg></ScrollButton></ScrollRow>
            </CanvasFrame>
            <FlowHead><Sash /><FlowTitle><Txt $s={11} $ls={-0.1}>Flow</Txt></FlowTitle></FlowHead>
            <FlowBody>
              <FlowActions><Txt $ls={-0.42}>Insert Routine</Txt><Txt $ls={-0.42}>Insert Loop</Txt></FlowActions>
              <FlowLine>
                <svg width="57" height="20"><path d="M11 10.500H57" stroke="#000" /><path d="M11 6V15" stroke="#000" strokeWidth="2" /></svg>
                <Routine><Txt $s={13} $ls={-0.4} $c="#d23232">instructPractice</Txt></Routine>
                <svg width="100" height="60"><path d="M0 10.500H100" stroke="#000" /><path d="M62 10.500Q49 12 48.500 24V40Q50 51 62 52.500H100" fill="none" stroke="#333" /><path d="M48.500 25 54 31H43Z" /></svg>
              </FlowLine>
            </FlowBody>
          </LeftCol>
          <Side>
            <SideHead />
            <SideDrop><svg width="7" height="6"><path d="M0 0H7L3.500 6Z" /></svg></SideDrop>
            <TileRow $mt={2} $l={11}><Tile $ghost /><Tile $ghost /><Tile><Raised><KeyboardIcon /></Raised></Tile></TileRow>
            <TileRow $mt={0} $l={11}><Tile><SpeakerIcon /></Tile></TileRow>
            <TileRow $mt={176} $l={14}><Tile><SliderIcon /></Tile><Tile><StaticIcon /></Tile><Tile><CubesIcon /></Tile></TileRow>
          </Side>
        </Body>
      </Builder>

      <StimWindow $x={435} $y={183} $w={700} $h={698}><Stim>green</Stim></StimWindow>

      <Win $x={240} $y={257} $w={224} $h={203} $shadow>
        <TitleBar $pl={8} $pr={1}><Txt $s={13} $ls={-0.2} $c="#999">Timing</Txt><CloseBox><Txt $s={10} $c="#fff" $b>x</Txt></CloseBox></TitleBar>
        <TimingBody>
          <Stats>
            {stats.map(([a, b, c, ind]) => <Stat key={a} $in={ind}><Txt $f={mono} $s={11} $ls={0} $c={c}>{a}</Txt><Txt $f={mono} $s={11} $ls={-0.1} $c={c}>{b}</Txt></Stat>)}
          </Stats>
          <TimingPlot />
        </TimingBody>
        <TimingFoot><Txt>HP: off</Txt><Txt>LP: off</Txt><Txt>Notch: off</Txt><Grip><GripDots /></Grip></TimingFoot>
      </Win>

      <Win $x={934} $y={41} $w={637} $h={157} $border="#a0a0a0" $shadow>
        <TitleBar $pl={8} $pr={9}><HeadIcon /><Txt $c="#999" $ls={-0.32}>BCI2000/Operator 3.05 - Python controlled - Running 00:21 s</Txt><X s={11} /></TitleBar>
        <OpMenu>
          {([["File", 32], ["View", 39], ["Window", 58], ["Help", 40]] as [string, number][]).map(([t, w]) => <MenuItem key={t} $w={w}><Txt $ls={-0.2}>{t}</Txt></MenuItem>)}
        </OpMenu>
        <OpBody>
          <OpFns>{[1, 2, 3, 4].map((n) => <QtButton key={n} $w={80} $h={21} $dim><Txt $s={11} $ls={-0.1} $c="#bebebe">{`Function ${n}`}</Txt></QtButton>)}</OpFns>
          <OpMain>
            <QtButton $w={107} $h={36} $dim><Txt $s={17} $b $ls={-0.25} $c="#bebebe">Config</Txt></QtButton>
            <Arrow><ArrowRight /></Arrow>
            <QtButton $w={107} $h={36} $dim><Txt $s={17} $b $ls={-0.15} $c="#bebebe">Set Config</Txt></QtButton>
            <Arrow><ArrowRight /></Arrow>
            <QtButton $w={107} $h={36}><Txt $s={17} $b $ls={-0.55}>Suspend</Txt></QtButton>
            <Push><QtButton $w={107} $h={36} $dim><Txt $s={17} $b $ls={-0.6} $c="#bebebe">Quit</Txt></QtButton></Push>
          </OpMain>
        </OpBody>
        <OpStatus>{["Running", "SignalGenerator running", "DummySignalProcessing running", "StimulusPresentation running"].map((t) => <Txt key={t} $ls={t[1] === "t" ? -0.38 : -0.32}>{t}</Txt>)}</OpStatus>
      </Win>

      <Win $x={1137} $y={236} $w={483} $h={195} $border="#a0a0a0" $shadow>
        <TitleBar $pl={8} $pr={9}><HeadIcon /><Txt $c="#999" $ls={-0.42}>BCI2000/Operator Watches</Txt><X s={11} /></TitleBar>
        <Table>
          <HeadRow><Cell><Txt $b $ls={-0.4}>Expression</Txt></Cell><Cell><Txt>Value</Txt></Cell><Cell><Txt>Range</Txt></Cell><Cell><Txt>Past 20s</Txt></Cell></HeadRow>
          <Row>
            <Cell $left><Txt>responseTime</Txt></Cell><Cell><Txt>3</Txt></Cell><Cell><Txt>0 ... 3</Txt></Cell>
            <Cell>
              <svg width="279" height="29" viewBox="0 0 279 29"><path d="M0 24.500H10.500V17.500H69.500V4.500H96.500V24.500H127.500V17.500H172.500V11H241.500V4.500H279" fill="none" stroke="#222" /></svg>
            </Cell>
          </Row>
          <Row><Cell $sel /><Cell /><Cell /><Cell /></Row>
        </Table>
        <WatchFoot>
          <QtButton $w={80} $h={23}><Txt $ls={-0.38}>Save Watches</Txt></QtButton>
          <QtButton $w={95} $h={23}><Txt $ls={-0.42}>Restore Watches</Txt></QtButton>
          <QtButton $w={83} $h={23}><Txt $ls={-0.38}>Clear Watches</Txt></QtButton>
          <Grip><GripDots /></Grip>
        </WatchFoot>
      </Win>

      <Win $x={1026} $y={481} $w={599} $h={400} $shadow>
        <TitleBar $pl={8}><Txt $c="#999" $ls={-0.25}>Source Signal</Txt></TitleBar>
        <SigBody>
          <SigNames $w={33}>{values.map((_, i) => <SigCell key={i} $y={hot(i)}><Txt $f={mono} $s={11} $ls={0} $c="#00ffff">{`Ch${i + 1}`}</Txt></SigCell>)}</SigNames>
          <SigNames $w={94}>{values.map((v, i) => <SigCell key={i} $v $y={hot(i)}><Txt $f={mono} $s={11} $ls={-0.2} $c={hot(i) ? "#ff0" : "#fff"}>{v}</Txt></SigCell>)}</SigNames>
          <SignalPlot />
        </SigBody>
      </Win>
    </Desktop>
  );
}
